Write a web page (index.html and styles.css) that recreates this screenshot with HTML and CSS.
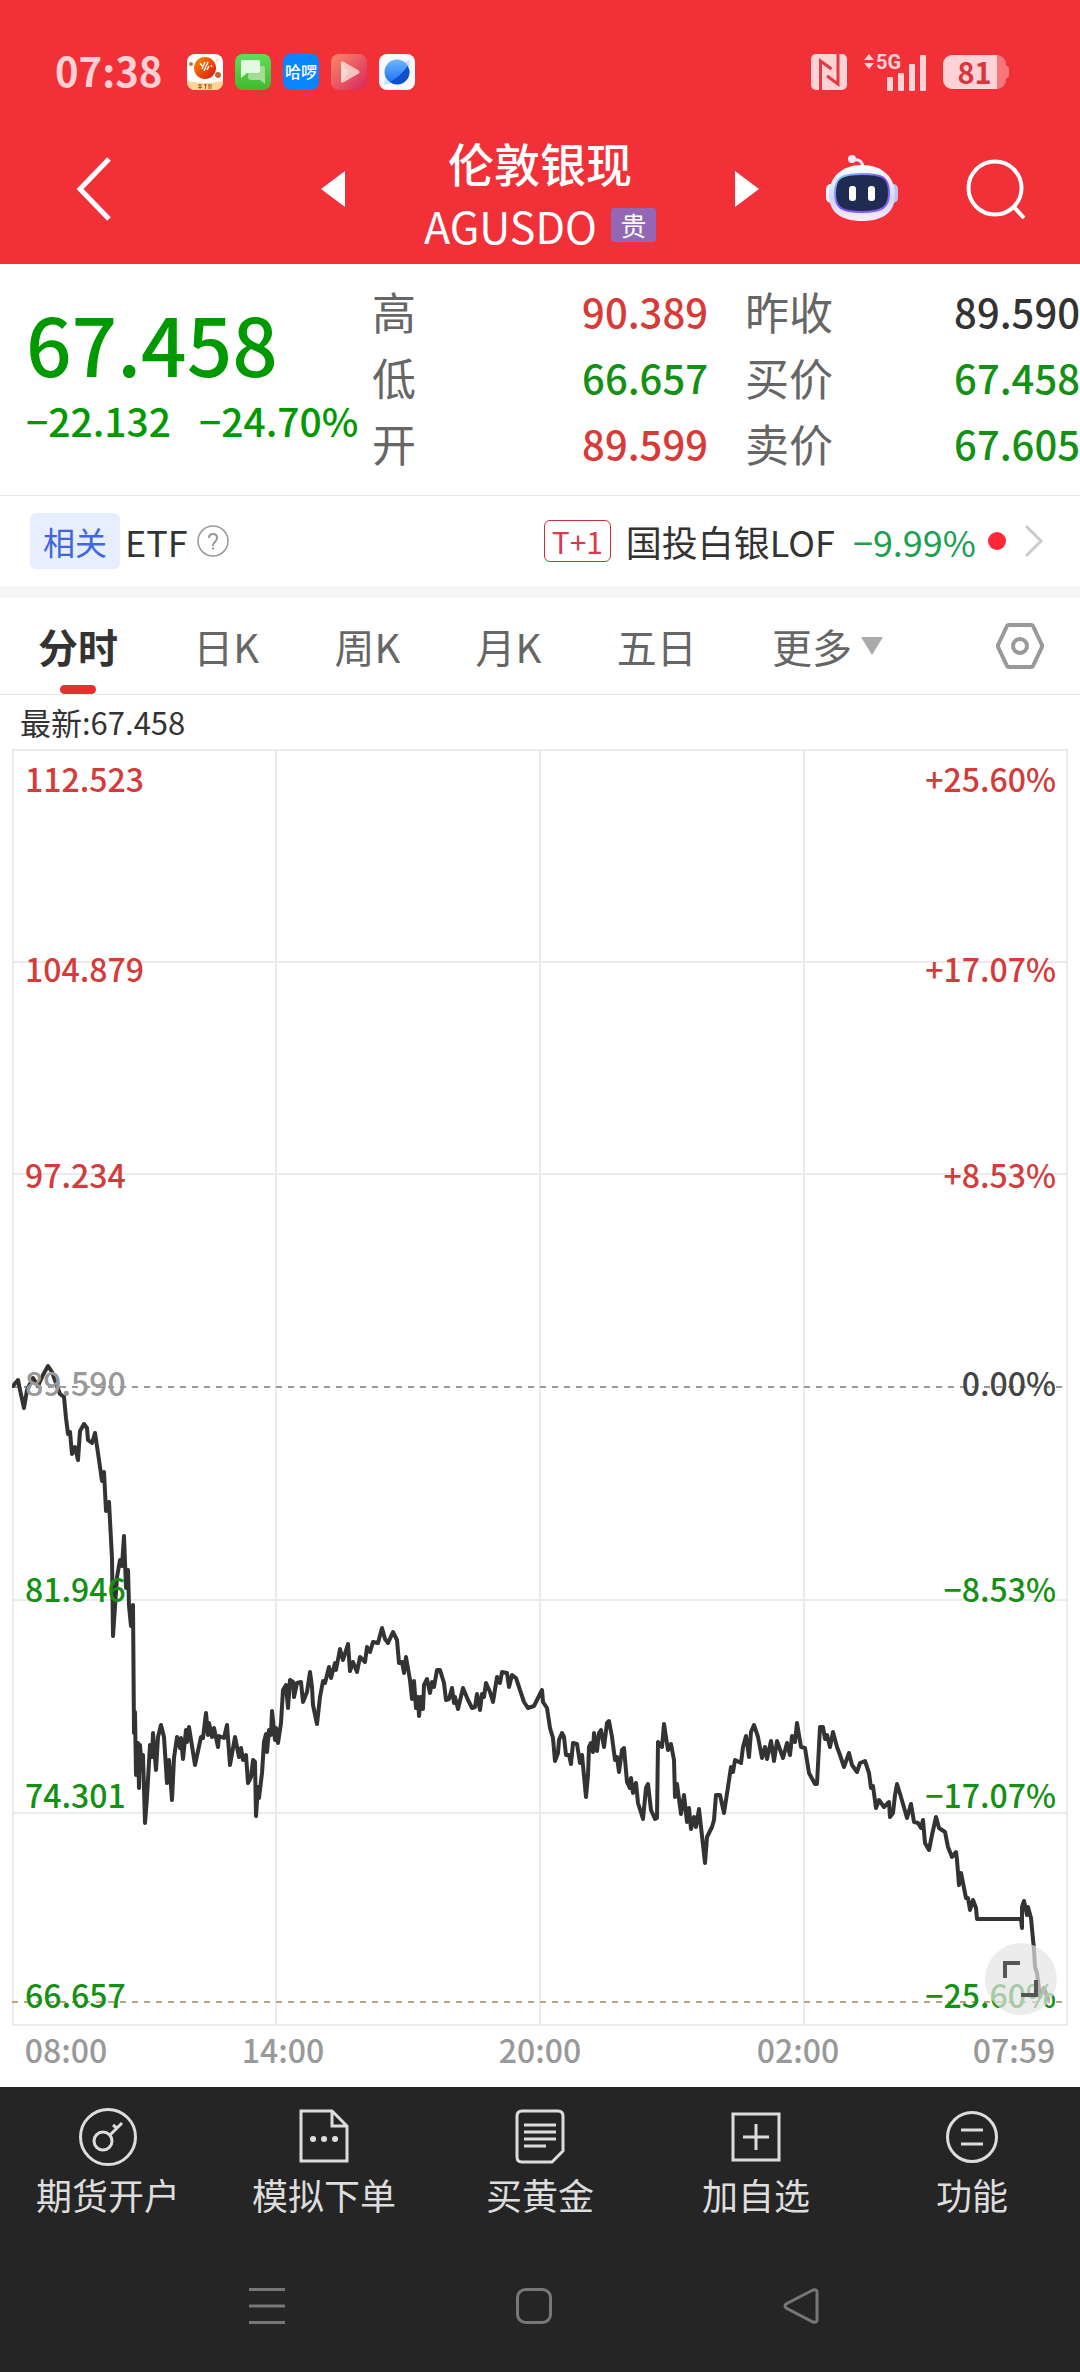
FILE: index.html
```html
<!DOCTYPE html>
<html lang="zh-CN">
<head>
    <meta charset="UTF-8">
    <meta name="viewport" content="width=device-width, initial-scale=1.0">
    <title>伦敦银现 AGUSDO</title>
    <link rel="stylesheet" href="styles.css">
</head>
<body>
    <div class="statusBar">
        <span class="clock">07:38</span>
        <div class="appIcons">
            <svg width="36" height="36" viewBox="0 0 36 36">
                <defs>
                    <linearGradient id="ball" x1="0" y1="0" x2="1" y2="1"><stop offset="0" stop-color="#ff8a00"/><stop offset="1" stop-color="#d81410"/></linearGradient>
                    <clipPath id="appClip"><rect width="36" height="36" rx="8"/></clipPath>
                </defs>
                <g clip-path="url(#appClip)">
                    <rect width="36" height="36" fill="#fff"/>
                    <path d="M0 27Q18 31 36 27V36H0Z" fill="#ffd591"/>
                    <circle cx="4" cy="10" r="2" fill="#c9743b"/>
                    <circle cx="31" cy="21" r="3" fill="#c9632b"/>
                    <circle cx="30" cy="6" r="1.5" fill="#ffe0b0"/>
                    <circle cx="18" cy="14" r="11" fill="url(#ball)"/>
                    <path d="M13 9l2 3M18 8l-3 7M21 8l-4 9M22 12l-2 4M24 11l1 2" stroke="#fff" stroke-width="1.4" fill="none"/>
                    <path d="M11 31h4M11 33.500h4M13 30v5M17 31h3M18.500 30v5M22 31h3M22 30v5M24 32v3" stroke="#a35a1c" fill="none"/>
                </g>
            </svg>
            <svg width="36" height="36" viewBox="0 0 36 36">
                <defs><linearGradient id="chat" x1="0" y1="0" x2="0" y2="1"><stop offset="0" stop-color="#5fdd58"/><stop offset="1" stop-color="#43b92c"/></linearGradient></defs>
                <rect width="36" height="36" rx="8" fill="url(#chat)"/>
                <path d="M14 12h14a2 2 0 0 1 2 2v16l-5-4H16a3 3 0 0 1-3-3z" fill="#a2dc96"/>
                <path d="M8 6h15a2 2 0 0 1 2 2v9a2 2 0 0 1-2 2H12l-6 5V8a2 2 0 0 1 2-2z" fill="#e4f9e1"/>
            </svg>
            <svg width="36" height="36" viewBox="0 0 36 36">
                <rect width="36" height="36" rx="8" fill="#0a84ff"/>
                <text x="18" y="24" class="tinyLogo">哈啰</text>
            </svg>
            <svg width="36" height="36" viewBox="0 0 36 36">
                <defs><linearGradient id="play" x1="0" y1="0" x2="1" y2="1"><stop offset="0" stop-color="#fb8a68"/><stop offset="1" stop-color="#d8255d"/></linearGradient></defs>
                <rect width="36" height="36" rx="8" fill="url(#play)"/>
                <path d="M10 8v20l7-10z" fill="#fbc0ae"/>
                <path d="M10 9q0-3 3-1l14 8q3 2 0 4l-14 8q-3 2-3-1z" fill="#fde0da" fill-opacity=".8"/>
            </svg>
            <svg width="36" height="36" viewBox="0 0 36 36">
                <defs><linearGradient id="globe" x1="0" y1="0" x2="0" y2="1"><stop offset="0" stop-color="#6bb8ff"/><stop offset="1" stop-color="#1b6af0"/></linearGradient></defs>
                <rect width="36" height="36" rx="8" fill="#f7f9fd"/>
                <path d="M25 8l6-2-1 7zM6 25l-1 6 7-2z" fill="#bfe3ff"/>
                <circle cx="18" cy="18" r="12.500" fill="url(#globe)"/>
                <path d="M28.500 12Q34 22 24 29Q17 32 11 28Q22 22 28.500 12z" fill="#0e4fcf"/>
            </svg>
        </div>
        <div class="systemIcons">
            <svg width="36" height="36" viewBox="0 0 36 36">
                <rect width="36" height="36" rx="5" fill="#ffd3d5"/>
                <path d="M9.500 36V7l11 8M27 0v30l-11-8" fill="none" stroke="#e23a41" stroke-width="3"/>
            </svg>
            <svg class="signal" width="62" height="38" viewBox="0 0 62 38" fill="#ffd3d5">
                <path d="M0 7L5 1l5 6zM0 10L5 16l5-6z"/>
                <text x="12" y="16" class="net">5G</text>
                <rect x="23" y="24" width="6" height="14" rx="1"/>
                <rect x="34" y="20" width="6" height="18" rx="1"/>
                <rect x="45" y="11" width="6" height="27" rx="1"/>
                <rect x="56" y="2" width="6" height="36" rx="1"/>
            </svg>
            <div class="battery"><span>81</span></div>
        </div>
    </div>

    <header class="header">
        <button class="iconButton back" aria-label="返回">
            <svg width="36" height="66" viewBox="0 0 36 66"><path d="M33 3L4 33l29 30" fill="none" stroke="#fff" stroke-width="5"/></svg>
        </button>
        <div class="switcher">
            <button class="iconButton" aria-label="上一个"><svg width="24" height="36" viewBox="0 0 24 36"><path d="M24 0v36L0 18z" fill="#fff"/></svg></button>
            <div class="title">
                <h1>伦敦银现</h1>
                <p>AGUSDO <span class="metalBadge">贵</span></p>
            </div>
            <button class="iconButton" aria-label="下一个"><svg width="24" height="36" viewBox="0 0 24 36"><path d="M0 0v36l24-18z" fill="#fff"/></svg></button>
        </div>
        <div class="headerTools">
            <button class="iconButton" aria-label="智能助手">
                <svg width="72" height="68" viewBox="0 0 72 68">
                    <defs>
                        <linearGradient id="shell" x1="0" y1="0" x2="0" y2="1"><stop offset="0" stop-color="#fff"/><stop offset=".6" stop-color="#cfd6f8"/><stop offset="1" stop-color="#f8eefb"/></linearGradient>
                        <linearGradient id="rim" x1="0" y1="0" x2="1" y2="1"><stop offset="0" stop-color="#7fe0ff"/><stop offset=".5" stop-color="#7a4bf0"/><stop offset="1" stop-color="#8c6cff"/></linearGradient>
                    </defs>
                    <path d="M26 5q10-2 11 7" fill="none" stroke="#e6e3f5" stroke-width="3"/>
                    <circle cx="26" cy="4" r="4" fill="#eceafa"/>
                    <rect x="0" y="29" width="10" height="19" rx="5" fill="#f3f3fd"/>
                    <rect x="62" y="29" width="10" height="19" rx="5" fill="#bcc3ef"/>
                    <path d="M36 10C56 10 69 22 69 40C69 58 56 66 36 66C16 66 3 58 3 40C3 22 16 10 36 10z" fill="url(#shell)"/>
                    <path d="M36 19C56 19 63 22 63 38C63 53 56 57 36 57C16 57 9 53 9 38C9 22 16 19 36 19z" fill="#1f2b50" stroke="url(#rim)" stroke-width="2"/>
                    <rect x="23" y="31" width="7" height="15" rx="3" fill="#fff"/>
                    <rect x="42" y="31" width="7" height="15" rx="3" fill="#fff"/>
                </svg>
            </button>
            <button class="iconButton" aria-label="搜索">
                <svg width="60" height="60" viewBox="0 0 60 60" fill="none" stroke="#fff" stroke-width="4"><circle cx="29" cy="29" r="26.500"/><path d="M47 47l11 12"/></svg>
            </button>
        </div>
    </header>

    <main>
        <section class="quote">
            <div class="latest">
                <p class="price">67.458</p>
                <p class="change"><span>−22.132</span><span>−24.70%</span></p>
            </div>
            <dl class="prices">
                <dt>高</dt><dd class="up">90.389</dd><dt>昨收</dt><dd>89.590</dd>
                <dt>低</dt><dd class="down">66.657</dd><dt>买价</dt><dd class="down">67.458</dd>
                <dt>开</dt><dd class="up">89.599</dd><dt>卖价</dt><dd class="down">67.605</dd>
            </dl>
        </section>

        <section class="related">
            <span class="relatedTag">相关</span>
            <span class="etf">ETF</span>
            <button class="iconButton" aria-label="说明">
                <svg width="32" height="32" viewBox="0 0 32 32" fill="none" stroke="#999" stroke-width="1.500"><circle cx="16" cy="16" r="15"/><path d="M12 13q0-4 4-4t4 4q0 2-2 4t-2 3v1" stroke-width="2"/><path d="M16 22.500v2" stroke-width="2"/></svg>
            </button>
            <a class="fund" href="#">
                <span class="tPlus">T+1</span>
                <span class="fundName">国投白银LOF</span>
                <span class="fundChange">−9.99%</span>
                <i class="dot"></i>
                <svg width="20" height="34" viewBox="0 0 20 34"><path d="M2 2l15 15L2 32" fill="none" stroke="#ccc" stroke-width="3"/></svg>
            </a>
        </section>

        <nav class="periods">
            <div class="periodList">
                <button class="period active">分时</button>
                <button class="period">日K</button>
                <button class="period">周K</button>
                <button class="period">月K</button>
                <button class="period">五日</button>
                <button class="period">更多<svg width="22" height="18" viewBox="0 0 22 18"><path d="M0 0h22L11 18z" fill="#aaa"/></svg></button>
            </div>
            <button class="iconButton" aria-label="设置">
                <svg width="48" height="46" viewBox="0 0 48 46" fill="none" stroke="#999" stroke-width="4"><path d="M13 2h22q1.500 0 2 1l8.500 18q1 2 0 4L37 43q-.5 1-2 1H13q-1.500 0-2-1L2.500 25q-1-2 0-4L11 3q.5-1 2-1z"/><circle cx="24" cy="23" r="7"/></svg>
            </button>
        </nav>

        <section class="chart">
            <p class="latestLine">最新:67.458</p>
            <div class="plot">
                <svg viewBox="12 749 1056 1330">
                    <g class="gridLines">
                        <path d="M13 750H1067V2025H13z"/>
                        <path d="M13 962H1067M13 1174H1067M13 1600H1067M13 1813H1067"/>
                        <path d="M276 750V2025M540 750V2025M804 750V2025"/>
                    </g>
                    <path class="baseLine" d="M12 1387H1062"/>
                    <path class="lowLine" d="M12 2002H1066"/>
                    <polyline class="trend" points="
                        13,1386 18,1380 20,1390 24,1408 27,1390 33,1378 38,1386 43,1375 48,1366 52,1372 57,1386 60,1394 64,1397 66,1418 68,1434 70,1432 72,1454 75,1447 78,1460 80,1431 84,1424 87,1428 88,1440 92,1443 95,1433 98,1453
                        102,1481 104,1472 106,1511 109,1502 112,1558 113,1636 117,1577 120,1560 122,1566 124,1536 126,1588 128,1570 129,1606 131,1626 133,1605 134,1733 135,1712 136,1775 138,1743 139,1788 140,1745 142,1770 143,1755 145,1823 147,1797
                        150,1745 152,1757 153,1733 156,1770 158,1737 161,1725 164,1737 167,1783 169,1760 172,1800 174,1758 177,1737 180,1748 181,1738 183,1759 186,1730 187,1742 189,1727 195,1765
                        201,1737 203,1738 206,1713 208,1735 209,1723 212,1737 214,1728 218,1747 219,1736 224,1738 227,1725 230,1765 235,1737 239,1757 241,1748 243,1760 246,1755 248,1783
                        251,1777 253,1760 255,1762 256,1816 258,1787 259,1798 262,1773 264,1742 266,1734 267,1752 269,1730 271,1735 272,1711 275,1740 276,1728 278,1743 281,1723 283,1690 286,1685 288,1708 290,1680 293,1682 294,1697 297,1683
                        301,1682 303,1702 307,1692 310,1672 312,1687 313,1705 317,1724 320,1697 323,1681 325,1683 329,1667 331,1678 335,1663 336,1670 340,1649 343,1660 348,1644 350,1671 353,1662 357,1672 360,1657 365,1662 367,1647 370,1652 373,1642 378,1643 382,1628 385,1639 388,1643 393,1632 397,1640 399,1663
                        402,1662 404,1673 406,1657 410,1680 412,1699 414,1681 416,1708 418,1697 419,1716 421,1697 423,1709 424,1685 427,1679 430,1693 432,1682 434,1687 437,1670 440,1670 444,1683 446,1700 449,1699
                        452,1688 454,1703 455,1697 458,1709 463,1688 468,1700 472,1708 475,1707 477,1694 480,1710 482,1694 484,1697 486,1683 490,1692 493,1702 497,1677
                        500,1683 502,1672 507,1673 509,1687 512,1675 516,1678 520,1690 524,1702 528,1708 534,1706 542,1690 543,1702 547,1708
                        550,1728 553,1738 555,1761 558,1753 559,1740 562,1733 564,1737 566,1755 569,1755 571,1764 573,1743 577,1744 580,1763 582,1755 586,1797 588,1775 589,1747 591,1743 593,1752 594,1733 597,1751 599,1733
                        601,1730 604,1747 607,1723 609,1721 612,1737 615,1760 617,1757 619,1772 622,1750 624,1748 627,1782 630,1788 631,1778 633,1793 636,1783 638,1803 643,1819 646,1788 648,1784
                        651,1810 655,1819 657,1818 658,1742 662,1747 664,1724 668,1750 671,1744 674,1760 675,1797 677,1784 681,1814 684,1795 687,1822 689,1808 691,1829 694,1817 696,1827 699,1809
                        703,1845 705,1863 707,1837 712,1827 714,1820 716,1795 720,1795 724,1813 728,1787 731,1767 733,1772 735,1760 741,1763 743,1747 746,1736 749,1757
                        751,1732 754,1725 758,1737 762,1758 765,1747 767,1759 771,1741 774,1761 777,1741 783,1758 787,1743 790,1755 792,1736 795,1742 797,1723
                        801,1747 805,1748 809,1773 815,1784 817,1784 820,1727 823,1727 825,1739 827,1735 830,1747 833,1732 837,1747 840,1755 844,1767 849,1753
                        852,1765 857,1772 860,1763 865,1761 869,1773 871,1788 873,1786 876,1808 879,1800 884,1807 889,1802 890,1817 893,1813 895,1795 897,1784
                        901,1797 907,1818 911,1804 914,1822 918,1823 921,1828 923,1820 925,1843 929,1850 932,1835 936,1817 939,1828 945,1832 948,1847
                        952,1857 956,1852 957,1860 959,1885 961,1873 966,1898 968,1898 970,1910 973,1900 976,1908 977,1919
                        1021,1919 1022,1928 1022,1907 1024,1901 1027,1915 1028,1907 1031,1918 1034,1950 1035,1967 1037,1973 1040,1997 1044,1988 1048,1999"/>
                    <g class="axis">
                        <text class="rise" x="25" y="792">112.523</text>
                        <text class="rise" x="25" y="982">104.879</text>
                        <text class="rise" x="25" y="1188">97.234</text>
                        <text class="flat" x="25" y="1396">89.590</text>
                        <text class="fall" x="25" y="1602">81.946</text>
                        <text class="fall" x="25" y="1808">74.301</text>
                        <text class="fall" x="25" y="2008">66.657</text>
                    </g>
                    <g class="axis axisRight">
                        <text class="rise" x="1056" y="792">+25.60%</text>
                        <text class="rise" x="1056" y="982">+17.07%</text>
                        <text class="rise" x="1056" y="1188">+8.53%</text>
                        <text class="zero" x="1056" y="1396">0.00%</text>
                        <text class="fall" x="1056" y="1602">−8.53%</text>
                        <text class="fall" x="1056" y="1808">−17.07%</text>
                        <text class="fall" x="1056" y="2008">−25.60%</text>
                    </g>
                    <g class="axis times">
                        <text x="66" y="2063">08:00</text>
                        <text x="283" y="2063">14:00</text>
                        <text x="540" y="2063">20:00</text>
                        <text x="798" y="2063">02:00</text>
                        <text x="1014" y="2063">07:59</text>
                    </g>
                </svg>
                <button class="iconButton expand" aria-label="全屏">
                    <svg width="38" height="38" viewBox="0 0 38 38" fill="none" stroke="#555" stroke-width="4"><path d="M18 3H3v15"/><path d="M19 35h15V20"/></svg>
                </button>
            </div>
        </section>
    </main>

    <footer class="footer">
        <div class="actions">
            <button class="action">
                <svg width="60" height="60" viewBox="0 0 60 60"><circle cx="30" cy="30" r="27.500"/><circle cx="25" cy="34" r="9"/><path d="M32 28L44 16M35 18l5 4"/></svg>
                期货开户
            </button>
            <button class="action">
                <svg width="60" height="60" viewBox="0 0 60 60"><path d="M8 4H38L53 19V54H7V4zM38 4V19H53"/><path d="M19 32h.1M30 32h.1M41 32h.1" class="dots"/></svg>
                模拟下单
            </button>
            <button class="action">
                <svg width="60" height="60" viewBox="0 0 60 60"><path d="M12 4H48Q53 4 53 9V44L42 55H12Q7 55 7 50V9Q7 4 12 4z"/><path d="M14 18H46M14 25H46M14 32H46M14 39H36"/></svg>
                买黄金
            </button>
            <button class="action">
                <svg width="60" height="60" viewBox="0 0 60 60"><path d="M7 7H53V53H7zM30 17V43M17 30H43"/></svg>
                加自选
            </button>
            <button class="action">
                <svg width="60" height="60" viewBox="0 0 60 60"><circle cx="30" cy="30" r="24.500"/><path d="M19 23H41M19 37H41"/></svg>
                功能
            </button>
        </div>
        <div class="systemNav">
            <button class="iconButton" aria-label="最近任务"><svg width="36" height="36" viewBox="0 0 36 36"><path d="M0 1.500H36M0 18H36M0 34.500H36"/></svg></button>
            <button class="iconButton" aria-label="主页"><svg width="36" height="36" viewBox="0 0 36 36"><rect x="1.500" y="1.500" width="33" height="33" rx="8"/></svg></button>
            <button class="iconButton" aria-label="后退"><svg width="36" height="36" viewBox="0 0 36 36"><path d="M30 2L3 16q-2 2 0 4L30 34q4 1 4-2V4q0-3-4-2z"/></svg></button>
        </div>
    </footer>
</body>
</html>
```

FILE: styles.css
```css
* {
    box-sizing: border-box;
}

body {
    margin: 0;
    background: #fff;
    color: #333;
    font-family: "Noto Sans CJK SC", sans-serif;
}

h1, p, dl, dd {
    margin: 0;
}

svg {
    display: block;
}

button {
    padding: 0;
    border: none;
    background: none;
    font-family: inherit;
    cursor: pointer;
}

.iconButton {
    display: block;
    flex: none;
}

/* status bar */
.statusBar {
    display: flex;
    align-items: center;
    height: 96px;
    padding: 48px 74px 0 55px;
    background: #f13038;
}

.clock {
    width: 132px;
    color: #ffd0d4;
    font-size: 40px;
    font-weight: 700;
    line-height: 44px;
    padding-bottom: 4px;
}

.appIcons {
    display: flex;
    gap: 12px;
}

.tinyLogo {
    fill: #fff;
    font-size: 16px;
    font-weight: 500;
    text-anchor: middle;
}

.systemIcons {
    display: flex;
    align-items: center;
    gap: 17px;
    margin-left: auto;
}

.net {
    font-family: Roboto, sans-serif;
    font-size: 20px;
    font-weight: 700;
}

.battery {
    position: relative;
    width: 63px;
    height: 34px;
    border-radius: 9px;
    background: linear-gradient(to right, #ffd3d5 54px, #f8757b 54px);
    color: #d9363d;
    font-size: 29px;
    font-weight: 700;
    line-height: 32px;
    text-align: center;
}

.battery::after {
    content: "";
    position: absolute;
    top: 11px;
    right: -3px;
    width: 3px;
    height: 12px;
    border-radius: 0 3px 3px 0;
    background: #f8757b;
}

/* header */
.header {
    display: grid;
    grid-template-columns: 1fr 438px 1fr;
    align-items: center;
    padding: 32px 54px 15px;
    background: #f13038;
    color: #fff;
}

.back {
    justify-self: start;
    margin-left: 22px;
}

.switcher {
    display: flex;
    align-items: center;
    justify-content: space-between;
}

.title {
    padding-top: 6px;
    text-align: center;
}

.title h1 {
    font-size: 46px;
    font-weight: 500;
    line-height: 56px;
}

.title p {
    display: flex;
    align-items: center;
    gap: 14px;
    margin-top: 11px;
    font-size: 43px;
    line-height: 48px;
}

.metalBadge {
    width: 45px;
    border-radius: 3px;
    background: #9467b4;
    font-size: 26px;
    line-height: 34px;
}

.headerTools {
    display: flex;
    align-items: center;
    justify-content: flex-end;
    gap: 68px;
}

/* quote */
.quote {
    display: flex;
    align-items: center;
    height: 232px;
    padding-bottom: 6px;
    border-bottom: 1px solid #e8e8e8;
}

.latest {
    flex: none;
    width: 372px;
    padding: 0 0 6px 26px;
    color: #090;
    font-weight: 500;
}

.price {
    margin-bottom: 5px;
    font-size: 80px;
    line-height: 88px;
}

.change {
    display: flex;
    gap: 28px;
    font-size: 39px;
    line-height: 58px;
    white-space: nowrap;
}

.prices {
    flex: 1;
    display: grid;
    grid-template-columns: 44px 292fr 125px 247fr;
    font-size: 44px;
    line-height: 66px;
}

.prices dt {
    color: #666;
}

.prices dt:nth-of-type(even) {
    padding-left: 37px;
}

.prices dd {
    font-size: 40px;
    font-weight: 500;
    text-align: right;
}

.up {
    color: #d93a37;
}

.down {
    color: #149114;
}

/* related fund */
.related {
    display: flex;
    align-items: center;
    height: 102px;
    padding: 0 36px 0 30px;
    border-bottom: 12px solid #f5f5f5;
}

.relatedTag {
    width: 90px;
    border-radius: 6px;
    background: #e7eeff;
    color: #4167e0;
    font-size: 32px;
    line-height: 56px;
    text-align: center;
}

.etf {
    margin: 0 9px 0 5px;
    font-size: 36px;
}

.fund {
    display: flex;
    align-items: center;
    margin-left: auto;
    color: #333;
    font-size: 36px;
    line-height: 50px;
    text-decoration: none;
}

.tPlus {
    width: 67px;
    border: 1px solid #c8323c;
    border-radius: 6px;
    color: #d93a4c;
    font-size: 30px;
    line-height: 40px;
    text-align: center;
}

.fundName {
    margin-left: 15px;
}

.fundChange {
    margin-left: 18px;
    color: #1aa050;
}

.dot {
    width: 18px;
    height: 18px;
    margin: 0 18px 0 12px;
    border-radius: 50%;
    background: #ff2738;
}

/* period tabs */
.periods {
    display: flex;
    align-items: center;
    justify-content: space-between;
    height: 97px;
    padding: 0 36px 0 38px;
    border-bottom: 1px solid #e8e8e8;
}

.periodList {
    display: flex;
    justify-content: space-between;
    width: 84%;
}

.period {
    position: relative;
    display: flex;
    align-items: center;
    gap: 9px;
    color: #666;
    font-size: 40px;
    line-height: 96px;
}

.period.active {
    color: #333;
    font-weight: 700;
}

.period.active::after {
    content: "";
    position: absolute;
    bottom: 0;
    left: 50%;
    width: 36px;
    height: 9px;
    margin-left: -18px;
    border-radius: 5px;
    background: #e53030;
}

/* chart */
.chart {
    padding: 0 12px 8px;
}

.latestLine {
    padding: 0 8px;
    font-size: 31px;
    line-height: 54px;
}

.plot {
    position: relative;
}

.gridLines {
    fill: none;
    stroke: #ebebeb;
    stroke-width: 2;
}

.baseLine, .lowLine {
    stroke: #999;
    stroke-width: 2;
    stroke-dasharray: 6 6;
}

.lowLine {
    stroke: #b9a47c;
}

.trend {
    fill: none;
    stroke: #333;
    stroke-width: 4;
    stroke-linejoin: round;
    stroke-linecap: round;
}

.axis {
    font-size: 32px;
    font-weight: 500;
}

.axisRight {
    text-anchor: end;
}

.rise {
    fill: #d23c3a;
}

.fall {
    fill: #149114;
}

.flat {
    fill: #999;
}

.zero {
    fill: #444;
}

.times {
    fill: #999;
    text-anchor: middle;
}

.expand {
    position: absolute;
    right: 11px;
    bottom: 64px;
    width: 72px;
    height: 72px;
    padding: 17px;
    border-radius: 50%;
    background: rgba(228, 228, 228, 0.7);
}

/* bottom bars */
.footer {
    padding-bottom: 48px;
    background: #252525;
}

.actions {
    display: grid;
    grid-template-columns: repeat(5, 1fr);
    padding-top: 20px;
}

.action {
    display: flex;
    flex-direction: column;
    align-items: center;
    gap: 4px;
    color: #ddd;
    font-size: 36px;
    line-height: 46px;
}

.action svg {
    fill: none;
    stroke: #ddd;
    stroke-width: 3;
}

.action .dots {
    stroke-width: 6;
    stroke-linecap: round;
}

.systemNav {
    display: flex;
    justify-content: space-between;
    padding: 71px 261px 0 249px;
}

.systemNav svg {
    fill: none;
    stroke: #777;
    stroke-width: 3;
}
```
